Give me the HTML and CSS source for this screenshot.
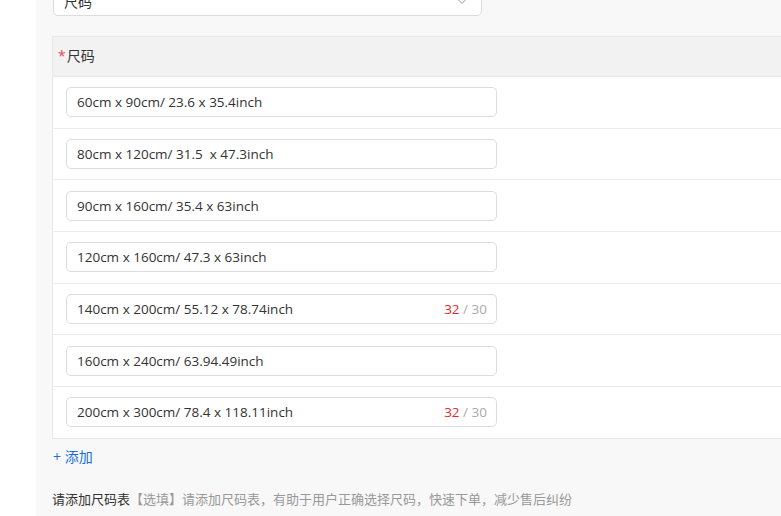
FILE: index.html
```html
<!DOCTYPE html>
<html lang="zh">
<head>
    <meta charset="UTF-8">
    <title>尺码</title>
    <link rel="stylesheet" href="styles.css">
</head>
<body>
    <div class="panel">
        <div class="select-box">
            <span>尺码</span>
            <svg class="arrow" width="14" height="14" viewBox="0 0 14 14"><path d="M2 4.5 L7 9.5 L12 4.5" fill="none" stroke="#999" stroke-width="1"/></svg>
        </div>

        <div class="size-table">
            <div class="size-head"><span class="req">*</span>尺码</div>
            <div class="size-row"><div class="size-input"><span>60cm x 90cm/ 23.6 x 35.4inch</span></div></div>
            <div class="size-row"><div class="size-input"><span>80cm x 120cm/ 31.5&nbsp; x 47.3inch</span></div></div>
            <div class="size-row"><div class="size-input"><span>90cm x 160cm/ 35.4 x 63inch</span></div></div>
            <div class="size-row"><div class="size-input"><span>120cm x 160cm/ 47.3 x 63inch</span></div></div>
            <div class="size-row"><div class="size-input"><span>140cm x 200cm/ 55.12 x 78.74inch</span><span class="count"><em>32</em> / 30</span></div></div>
            <div class="size-row"><div class="size-input"><span>160cm x 240cm/ 63.94.49inch</span></div></div>
            <div class="size-row"><div class="size-input"><span>200cm x 300cm/ 78.4 x 118.11inch</span><span class="count"><em>32</em> / 30</span></div></div>
        </div>

        <a href="#" class="add-link">+ 添加</a>

        <p class="tip"><b>请添加尺码表</b>【选填】请添加尺码表，有助于用户正确选择尺码，快速下单，减少售后纠纷</p>
    </div>
</body>
</html>
```

FILE: styles.css
```css
body, html {
    margin: 0;
    padding: 0;
    height: 100%;
    overflow: hidden;
    background: #fff;
    font-family: "Open Sans", "Noto Sans CJK SC", sans-serif;
    font-size: 13.5px;
    color: #333;
}
.panel {
    margin-left: 36px;
    padding-left: 16px;
    padding-top: 1px;
    margin-top: -16px;
    background: #f8f8f8;
    height: 600px;
    width: 900px;
}
.select-box {
    margin-left: 1px;
    width: 429px;
    height: 31px;
    box-sizing: border-box;
    border: 1px solid #dcdcdc;
    border-radius: 5px;
    background: #fff;
    display: flex;
    align-items: center;
    justify-content: space-between;
    padding: 0 12px 0 10px;
    font-size: 14px;
}
.size-table {
    margin-top: 20px;
    width: 780px;
    border: 1px solid #e8e8e8;
    background: #fff;
}
.size-head {
    height: 36px;
    padding-bottom: 3px;
    background: #f2f2f2;
    border-bottom: 1px solid #e6e6e6;
    display: flex;
    align-items: center;
    padding-left: 5px;
    font-size: 14px;
}
.req {
    color: #e5484d;
    margin-right: 1px;
}
.size-row {
    height: 50.7px;
    border-bottom: 1px solid #ececec;
    display: flex;
    align-items: center;
    padding-left: 13px;
}
.size-row:last-child {
    border-bottom: none;
}
.size-input {
    width: 431px;
    height: 30px;
    box-sizing: border-box;
    border: 1px solid #dcdcdc;
    border-radius: 5px;
    display: flex;
    align-items: center;
    justify-content: space-between;
    padding: 0 9px 0 10px;
}
.count {
    color: #aaa;
}
.count em {
    font-style: normal;
    color: #e02b2b;
}
.add-link {
    display: block;
    margin-top: 7px;
    margin-left: 1px;
    color: #1a6fd9;
    text-decoration: none;
    font-size: 14px;
}
.tip {
    margin: 23px 0 0;
    font-size: 13px;
    color: #999;
}
.tip b {
    font-weight: normal;
    color: #333;
}
```
